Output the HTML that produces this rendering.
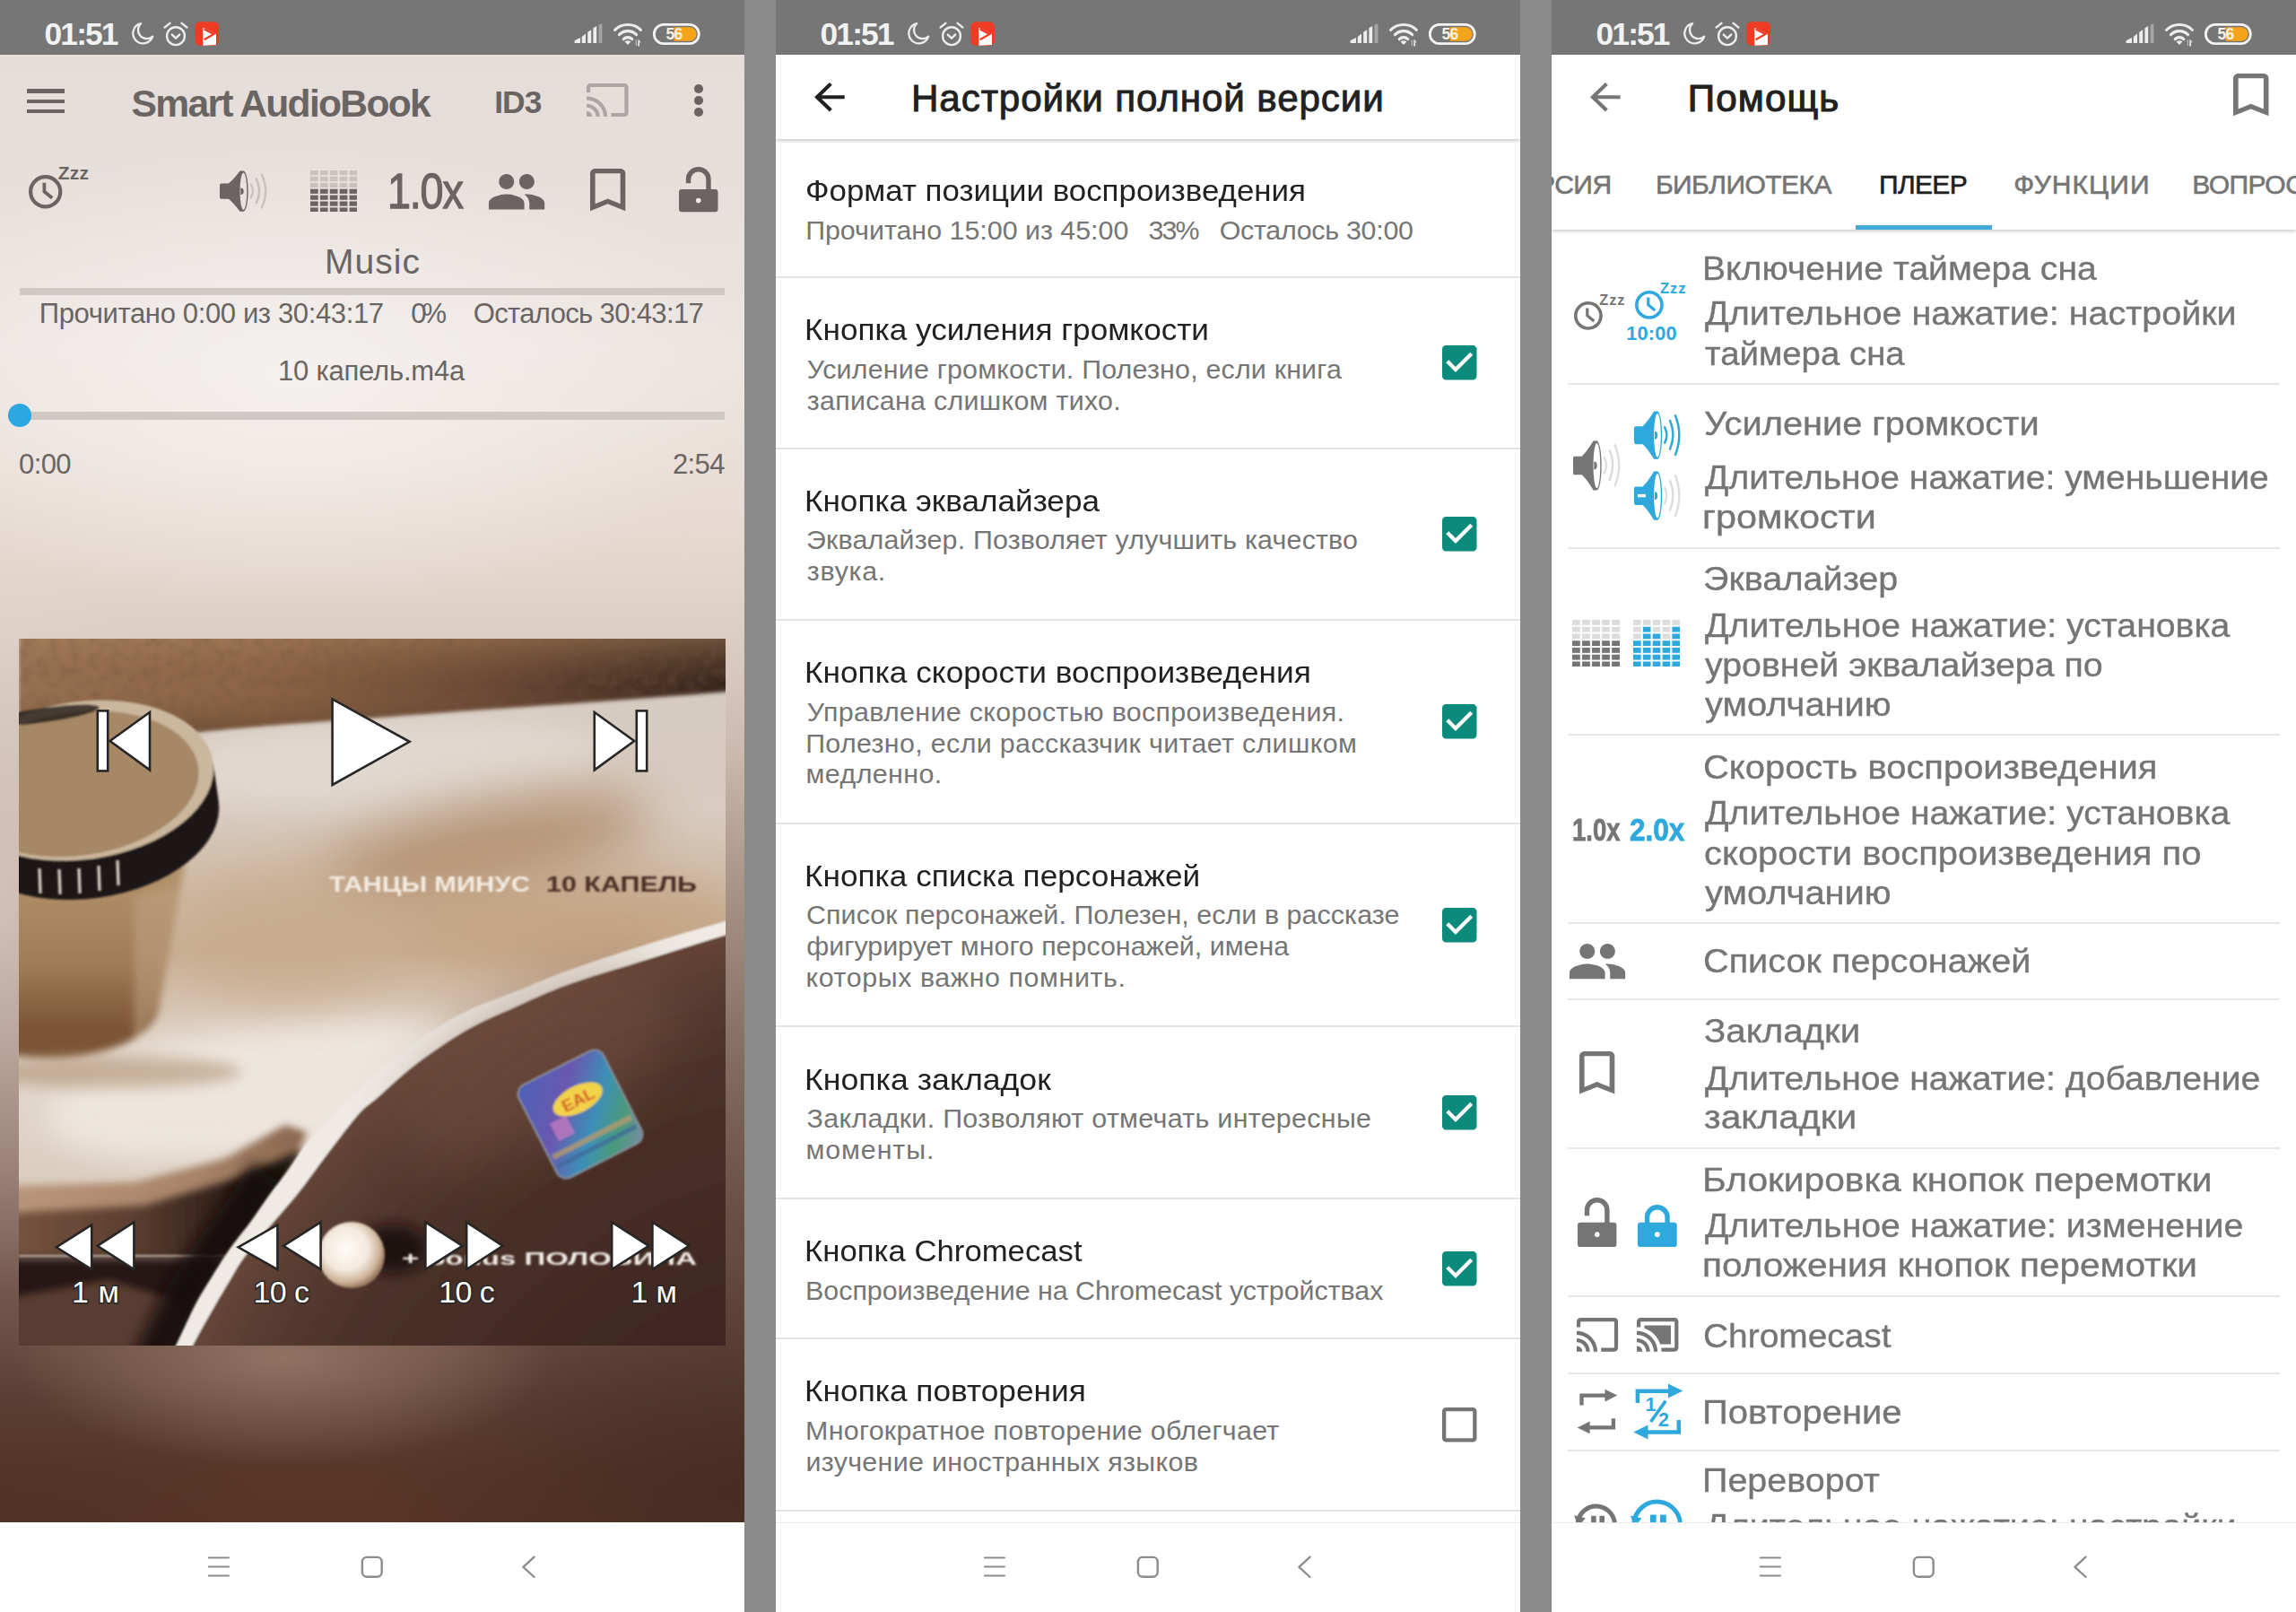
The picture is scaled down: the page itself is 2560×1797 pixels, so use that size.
<!DOCTYPE html><html lang="ru"><head><meta charset="utf-8"><title>Smart AudioBook</title><style>
html,body{margin:0;padding:0}
body{width:2560px;height:1797px;background:#8a8a8a;position:relative;overflow:hidden;font-family:"Liberation Sans",sans-serif;}
.ph{position:absolute;top:0;width:830px;height:1797px;overflow:hidden}
.t{position:absolute;white-space:nowrap;line-height:1;}
.b{position:absolute;display:block}
</style></head><body><div class="ph" style="left:0"><div class="b" style="left:0;top:61px;width:830px;height:1636px;background:radial-gradient(ellipse 260px 420px at 0px 960px, rgba(236,226,218,0.5), rgba(236,226,218,0) 100%),radial-gradient(ellipse 300px 520px at 830px 1300px, rgba(70,45,38,0.42), rgba(70,45,38,0) 100%),radial-gradient(ellipse 300px 120px at 315px 1452px, rgba(152,121,106,0.85), rgba(152,121,106,0) 100%),radial-gradient(ellipse 420px 260px at 830px 1600px, rgba(58,34,28,0.5), rgba(58,34,28,0) 100%),radial-gradient(ellipse 300px 200px at 0px 1640px, rgba(70,42,34,0.35), rgba(70,42,34,0) 100%),radial-gradient(ellipse 520px 260px at 330px 360px, rgba(246,242,240,0.9), rgba(246,242,240,0) 100%),linear-gradient(180deg,#e5ddd9 0px,#e6dfdb 149px,#ebe5e1 329px,#eadfd8 449px,#e4d7ce 559px,#dccdc3 651px,#cdbcb1 759px,#bba69a 899px,#a0877c 1099px,#80655b 1299px,#694c41 1439px,#5e4136 1499px,#583729 1579px,#573527 1636px)"></div><div class="b" style="left:0px;top:0px;width:830px;height:61px;background:#767676;"></div><div class="t" style="top:20.53px;font-size:35.4px;font-weight:700;color:#f2f2f2;letter-spacing:-1.915px;left:49.60px;">01:51</div><svg class="b" style="left:144px;top:23px;" width="30" height="30" viewBox="0 0 30 30"><path d="M13.2 3.2 A11.2 11.2 0 1 0 26.2 17.6 A9.6 9.6 0 0 1 13.2 3.2 Z" fill="none" stroke="#ededed" stroke-width="2.3" stroke-linejoin="round"/></svg><svg class="b" style="left:180px;top:22px;" width="32" height="32" viewBox="0 0 32 32"><g fill="none" stroke="#ededed" stroke-width="2.4" stroke-linecap="round" stroke-linejoin="round"><circle cx="16" cy="18.2" r="9.9"/><path d="M11.8 16.6 L16 20.6 L20.2 16.6"/><path d="M3.6 8.6 L9.4 3.8"/><path d="M28.4 8.6 L22.6 3.8"/></g></svg><svg class="b" style="left:217px;top:24px;" width="28" height="28" viewBox="0 0 28 28"><rect x="0.4" y="0.2" width="26.6" height="26.6" rx="5.5" fill="#ef3b24"/><path d="M9.4 6.8 L24 14.2 L24 26 L9.4 26.8 Z" fill="#fff"/><path d="M10.6 8.4 L21.4 14 L10.6 20.2" fill="none" stroke="#ef3b24" stroke-width="2.2"/></svg><svg class="b" style="left:640px;top:25px;" width="34" height="25" viewBox="0 0 34 25"><g fill="#ededed"><path d="M0.6 23 L0.6 20.2 L7 17 L7 23 Z"/><path d="M8.8 23 L8.8 16 L13 12.6 L13 23 Z"/><path d="M15.2 23 L15.2 10.8 L19.2 8.2 L19.2 23 Z"/><path d="M21.4 23 L21.4 6.2 L25.2 4 L25.2 23 Z"/></g><path d="M27.6 23 L27.6 2.4 L31.4 1.4 L31.4 23 Z" fill="#a6a6a6"/></svg><svg class="b" style="left:682px;top:24px;" width="38" height="28" viewBox="0 0 38 28"><g fill="none" stroke="#ededed" stroke-width="3.1" stroke-linecap="round"><path d="M3.6 9.4 A20.5 20.5 0 0 1 32.4 9.4"/><path d="M8.4 14.6 A13.6 13.6 0 0 1 27.6 14.6"/><path d="M13.2 19.6 A6.8 6.8 0 0 1 22.8 19.6"/></g><path d="M18 26 L14.6 22.6 A4.8 4.8 0 0 1 21.4 22.6 Z" fill="#ededed"/><path d="M29.6 19.6 L32.8 23.2 L31 23.2 L31 27.4 L29.2 27.4 L29.2 23.2 Z" fill="#e4e4e4"/><path d="M26.6 20.6 L28 20.6 L28 27.6 L26.6 26.4 Z" fill="#b4b4b4"/></svg><svg class="b" style="left:726px;top:24px;" width="58" height="28" viewBox="0 0 58 28"><path d="M25.6 6.3 H42.9 A7.7 7.7 0 0 1 42.9 21.7 H25.6 Z" fill="#f5a31a"/><rect x="3.3" y="3.4" width="50" height="21.2" rx="10.6" fill="none" stroke="#f4f4f4" stroke-width="2.8"/><text x="25.6" y="20.2" font-family="Liberation Sans, sans-serif" font-weight="700" font-size="17.5" fill="#f7f1e4" text-anchor="middle" letter-spacing="-0.6">56</text></svg><div class="b" style="left:30.2px;top:99.4px;width:42.1px;height:4.3px;background:#6a6562;"></div><div class="b" style="left:30.2px;top:110.8px;width:42.1px;height:4.3px;background:#6a6562;"></div><div class="b" style="left:30.2px;top:122.1px;width:42.1px;height:4.3px;background:#6a6562;"></div><div class="t" style="top:93.84px;font-size:42.6px;font-weight:700;color:#6a6562;letter-spacing:-1.714px;left:146.57px;">Smart AudioBook</div><div class="t" style="top:95.62px;font-size:35.3px;font-weight:700;color:#6a6562;letter-spacing:-0.948px;left:551.24px;">ID3</div><svg preserveAspectRatio="none" class="b" style="left:654.2px;top:93.3px;overflow:visible;" width="46.6" height="37.1" viewBox="1 3 22 18"><path d="M21 3H3c-1.1 0-2 .9-2 2v3h2V5h18v14h-7v2h7c1.1 0 2-.9 2-2V5c0-1.1-.9-2-2-2zM1 18v3h3c0-1.66-1.34-3-3-3zm0-4v2c2.76 0 5 2.24 5 5h2c0-3.87-3.13-7-7-7zm0-4v2c4.97 0 9 4.03 9 9h2c0-6.08-4.93-11-11-11z" fill="#aba6a3"/></svg><div class="b" style="left:774.3px;top:94.3px;width:9.4px;height:9.4px;border-radius:50%;background:#6a6562"></div><div class="b" style="left:774.3px;top:107.39999999999999px;width:9.4px;height:9.4px;border-radius:50%;background:#6a6562"></div><div class="b" style="left:774.3px;top:120.2px;width:9.4px;height:9.4px;border-radius:50%;background:#6a6562"></div><svg class="b" style="left:32px;top:195px;overflow:visible;" width="37.4" height="37.4" viewBox="0 0 37.4 37.4"><circle cx="18.7" cy="18.7" r="16.61" fill="none" stroke="#6a6562" stroke-width="4.19"/><path d="M17.39 8.79 V18.51 L26.18 25.81" fill="none" stroke="#6a6562" stroke-width="3.77"/></svg><div class="t" style="top:181.82px;font-size:21px;font-weight:700;color:#6a6562;letter-spacing:0.228px;left:64.67px;">Zzz</div><svg preserveAspectRatio="none" class="b" style="left:244.7px;top:190.2px;overflow:visible;" width="53.3" height="46.3" viewBox="0 0 53 46.3"><path d="M1.8 14.6 H9.7 Q15.4 10.2 22.4 0.5 H26.2 V45.8 H22.4 Q15.4 36.1 9.7 31.7 H1.8 Q0 31.7 0 29.9 V16.4 Q0 14.6 1.8 14.6 Z" fill="#6a6562"/><ellipse cx="26.2" cy="23.15" rx="5.3" ry="22.7" fill="#6a6562"/><ellipse cx="26.25" cy="23.15" rx="3.85" ry="20.7" fill="#e8e1dd"/><path d="M23.2 19.4 A3.3 3.75 0 0 1 23.2 26.9 Z" fill="#6a6562"/><g fill="none" stroke-width="2.5" stroke-linecap="round"><path d="M34.6 15.8 Q39 23 34.6 30.2" stroke="#cbc5c1"/><path d="M40.6 9.5 Q47.2 22.8 40.6 36.1" stroke="#c6c0bc"/><path d="M46.6 4.6 Q55.2 23 46.6 41.4" stroke="#c9c3bf"/></g></svg><svg class="b" style="left:345.8px;top:189.8px;" width="52.3" height="46.6" viewBox="0 0 52.3 46.6"><rect x="0.00" y="0.00" width="8.70" height="5.20" fill="#c9c3bf"/><rect x="0.00" y="6.90" width="8.70" height="5.20" fill="#c9c3bf"/><rect x="0.00" y="13.80" width="8.70" height="5.20" fill="#c9c3bf"/><rect x="0.00" y="20.70" width="8.70" height="5.20" fill="#6a6562"/><rect x="0.00" y="27.60" width="8.70" height="5.20" fill="#6a6562"/><rect x="0.00" y="34.50" width="8.70" height="5.20" fill="#6a6562"/><rect x="0.00" y="41.40" width="8.70" height="5.20" fill="#6a6562"/><rect x="10.90" y="0.00" width="8.70" height="5.20" fill="#c9c3bf"/><rect x="10.90" y="6.90" width="8.70" height="5.20" fill="#c9c3bf"/><rect x="10.90" y="13.80" width="8.70" height="5.20" fill="#c9c3bf"/><rect x="10.90" y="20.70" width="8.70" height="5.20" fill="#6a6562"/><rect x="10.90" y="27.60" width="8.70" height="5.20" fill="#6a6562"/><rect x="10.90" y="34.50" width="8.70" height="5.20" fill="#6a6562"/><rect x="10.90" y="41.40" width="8.70" height="5.20" fill="#6a6562"/><rect x="21.80" y="0.00" width="8.70" height="5.20" fill="#c9c3bf"/><rect x="21.80" y="6.90" width="8.70" height="5.20" fill="#c9c3bf"/><rect x="21.80" y="13.80" width="8.70" height="5.20" fill="#c9c3bf"/><rect x="21.80" y="20.70" width="8.70" height="5.20" fill="#6a6562"/><rect x="21.80" y="27.60" width="8.70" height="5.20" fill="#6a6562"/><rect x="21.80" y="34.50" width="8.70" height="5.20" fill="#6a6562"/><rect x="21.80" y="41.40" width="8.70" height="5.20" fill="#6a6562"/><rect x="32.70" y="0.00" width="8.70" height="5.20" fill="#c9c3bf"/><rect x="32.70" y="6.90" width="8.70" height="5.20" fill="#c9c3bf"/><rect x="32.70" y="13.80" width="8.70" height="5.20" fill="#c9c3bf"/><rect x="32.70" y="20.70" width="8.70" height="5.20" fill="#6a6562"/><rect x="32.70" y="27.60" width="8.70" height="5.20" fill="#6a6562"/><rect x="32.70" y="34.50" width="8.70" height="5.20" fill="#6a6562"/><rect x="32.70" y="41.40" width="8.70" height="5.20" fill="#6a6562"/><rect x="43.60" y="0.00" width="8.70" height="5.20" fill="#c9c3bf"/><rect x="43.60" y="6.90" width="8.70" height="5.20" fill="#c9c3bf"/><rect x="43.60" y="13.80" width="8.70" height="5.20" fill="#c9c3bf"/><rect x="43.60" y="20.70" width="8.70" height="5.20" fill="#6a6562"/><rect x="43.60" y="27.60" width="8.70" height="5.20" fill="#6a6562"/><rect x="43.60" y="34.50" width="8.70" height="5.20" fill="#6a6562"/><rect x="43.60" y="41.40" width="8.70" height="5.20" fill="#6a6562"/></svg><div class="t" style="top:186.34px;font-size:55px;color:#6a6562;left:432.41px;-webkit-text-stroke:1.3px #6a6562;transform:scaleX(0.85);transform-origin:0 0;letter-spacing:-1.4px;">1.0x</div><svg preserveAspectRatio="none" class="b" style="left:545px;top:193.5px;overflow:visible;" width="62.2" height="39.4" viewBox="1 5 22 14"><path d="M16 11c1.66 0 2.99-1.34 2.99-3S17.66 5 16 5c-1.66 0-3 1.34-3 3s1.34 3 3 3zm-8 0c1.66 0 2.99-1.34 2.99-3S9.66 5 8 5C6.34 5 5 6.34 5 8s1.34 3 3 3zm0 2c-2.33 0-7 1.17-7 3.5V19h14v-2.5c0-2.33-4.67-3.5-7-3.5zm8 0c-.29 0-.62.02-.97.05 1.16.84 1.97 1.97 1.97 3.45V19h6v-2.5c0-2.33-4.67-3.5-7-3.5z" fill="#6a6562"/></svg><svg preserveAspectRatio="none" class="b" style="left:657.9px;top:188.4px;overflow:visible;" width="39.3" height="47.2" viewBox="5 3 14 18"><path d="M17 3H7c-1.1 0-1.99.9-1.99 2L5 21l7-3 7 3V5c0-1.1-.9-2-2-2zm0 15l-5-2.18L7 18V5h10v13z" fill="#6a6562"/></svg><svg class="b" style="left:757px;top:186.2px;overflow:visible;" width="43.5" height="50.3" viewBox="0 0 43.5 50.3"><path d="M10.53 18.30 V13.92 A11.22 11.22 0 0 1 32.97 13.92 V26.10" fill="none" stroke="#6a6562" stroke-width="5.4"/><rect x="0" y="25.10" width="43.5" height="25.2" rx="3.2" fill="#6a6562"/><circle cx="21.75" cy="37.45" r="2.8" fill="#efeae7"/></svg><div class="t" style="top:271.99px;font-size:39px;color:#6a6562;letter-spacing:1.096px;left:-185.00px;width:1200px;text-align:center;text-indent:1.096px;">Music</div><div class="b" style="left:21.5px;top:320.6px;width:786.5px;height:8px;background:#cfc9c6;"></div><div class="t" style="top:334.36px;font-size:31px;color:#6a6562;letter-spacing:-0.364px;left:43.79px;">Прочитано 0:00 из 30:43:17</div><div class="t" style="top:334.36px;font-size:31px;color:#6a6562;letter-spacing:-4.889px;left:458.19px;">0%</div><div class="t" style="top:334.36px;font-size:31px;color:#6a6562;letter-spacing:-0.643px;left:527.73px;">Осталось 30:43:17</div><div class="t" style="top:397.86px;font-size:31px;color:#6a6562;letter-spacing:-0.215px;left:310.04px;">10 капель.m4a</div><div class="b" style="left:21.5px;top:459.4px;width:786.5px;height:8.2px;background:#cec7c3;"></div><div class="b" style="left:8.5px;top:450.3px;width:26px;height:26px;border-radius:50%;background:#2ba8e0"></div><div class="t" style="top:502.16px;font-size:31px;color:#6a6562;letter-spacing:-0.605px;left:21.09px;">0:00</div><div class="t" style="top:502.16px;font-size:31px;color:#6a6562;letter-spacing:-0.623px;left:749.94px;">2:54</div><svg class="b" style="left:21px;top:712px" width="788" height="788" viewBox="21 712 788 788"><defs>
<filter id="bl2" filterUnits="userSpaceOnUse" x="-300" y="400" width="1500" height="1500"><feGaussianBlur stdDeviation="2"/></filter>
<filter id="bl1" filterUnits="userSpaceOnUse" x="-300" y="400" width="1500" height="1500"><feGaussianBlur stdDeviation="1.1"/></filter>
<filter id="bl4" filterUnits="userSpaceOnUse" x="-300" y="400" width="1500" height="1500"><feGaussianBlur stdDeviation="4"/></filter>
<filter id="bl8" filterUnits="userSpaceOnUse" x="-300" y="400" width="1500" height="1500"><feGaussianBlur stdDeviation="8"/></filter>
<filter id="bl16" filterUnits="userSpaceOnUse" x="-300" y="400" width="1500" height="1500"><feGaussianBlur stdDeviation="16"/></filter>
<filter id="bl30" filterUnits="userSpaceOnUse" x="-300" y="400" width="1500" height="1500"><feGaussianBlur stdDeviation="30"/></filter>
<filter id="lea" x="0" y="0" width="100%" height="100%"><feTurbulence type="fractalNoise" baseFrequency="0.09" numOctaves="2" seed="7" result="n"/><feColorMatrix in="n" type="matrix" values="0 0 0 0 0.16  0 0 0 0 0.09  0 0 0 0 0.05  0 0 0 1.5 -0.62"/><feGaussianBlur stdDeviation="1.2"/><feComposite in2="SourceGraphic" operator="in"/></filter>
<linearGradient id="gLea" x1="21" y1="0" x2="809" y2="0" gradientUnits="userSpaceOnUse"><stop offset="0" stop-color="#977252"/><stop offset="0.35" stop-color="#8b6446"/><stop offset="0.65" stop-color="#6c4a36"/><stop offset="0.85" stop-color="#4e3528"/><stop offset="1" stop-color="#35241c"/></linearGradient>
<linearGradient id="gLeaV" x1="0" y1="712" x2="0" y2="830" gradientUnits="userSpaceOnUse"><stop offset="0" stop-color="#b08a62" stop-opacity="0.45"/><stop offset="0.45" stop-color="#8b6244" stop-opacity="0"/><stop offset="1" stop-color="#2a1a12" stop-opacity="0.5"/></linearGradient>
<linearGradient id="gSurf" x1="0" y1="780" x2="0" y2="1340" gradientUnits="userSpaceOnUse"><stop offset="0" stop-color="#d6cbc1"/><stop offset="0.22" stop-color="#d8cbbf"/><stop offset="0.5" stop-color="#c9ae94"/><stop offset="0.72" stop-color="#e4dad0"/><stop offset="1" stop-color="#d9cabc"/></linearGradient>
<radialGradient id="gDisc" cx="953" cy="1832" r="814" gradientUnits="userSpaceOnUse"><stop offset="0.5" stop-color="#3f2822"/><stop offset="0.8" stop-color="#4c3129"/><stop offset="0.93" stop-color="#5a3d32"/><stop offset="1" stop-color="#684739"/></radialGradient>
<radialGradient id="gPearl" cx="386" cy="1392" r="44" gradientUnits="userSpaceOnUse"><stop offset="0" stop-color="#fffdf8"/><stop offset="0.55" stop-color="#f3e9dc"/><stop offset="0.85" stop-color="#cdb39a"/><stop offset="1" stop-color="#9a7a60"/></radialGradient>
<linearGradient id="gGlass" x1="0" y1="980" x2="0" y2="1190" gradientUnits="userSpaceOnUse"><stop offset="0" stop-color="#b09069"/><stop offset="0.45" stop-color="#a07c57"/><stop offset="0.8" stop-color="#7b5535"/></linearGradient>
<linearGradient id="gStk" x1="0" y1="0" x2="1" y2="1"><stop offset="0" stop-color="#4a62b8"/><stop offset="0.35" stop-color="#6a58b0"/><stop offset="0.6" stop-color="#3c8fb8"/><stop offset="0.8" stop-color="#4a9a7a"/><stop offset="1" stop-color="#7a8aa8"/></linearGradient>
<clipPath id="cArt"><rect x="21" y="712" width="788" height="788"/></clipPath>
</defs><g clip-path="url(#cArt)"><rect x="21" y="712" width="788" height="788" fill="url(#gSurf)"/><ellipse cx="420" cy="850" rx="260" ry="45" fill="#e2dad2" opacity="0.85" filter="url(#bl16)" transform="rotate(-3 420 850)"/><ellipse cx="300" cy="1215" rx="250" ry="70" fill="#efe8e0" opacity="0.9" filter="url(#bl16)" transform="rotate(-8 300 1215)"/><ellipse cx="540" cy="945" rx="190" ry="48" fill="#ad8868" opacity="0.8" filter="url(#bl30)" transform="rotate(-12 540 945)"/><ellipse cx="640" cy="1030" rx="200" ry="50" fill="#c2a180" opacity="0.8" filter="url(#bl30)"/><ellipse cx="320" cy="1040" rx="120" ry="70" fill="#c7ab8e" opacity="0.8" filter="url(#bl30)"/><g filter="url(#bl2)"><path d="M21 700 H820 V770 C700 781 560 789 434 799 C330 806 260 812 200 818 L21 830 Z" fill="url(#gLea)"/><path d="M21 700 H820 V770 C700 781 560 789 434 799 C330 806 260 812 200 818 L21 830 Z" fill="url(#gLeaV)"/></g><path d="M21 700 H820 V770 C700 781 560 789 434 799 C330 806 260 812 200 818 L21 830 Z" fill="#000" filter="url(#lea)" opacity="0.55"/><linearGradient id="gBand" x1="21" y1="0" x2="340" y2="0" gradientUnits="userSpaceOnUse"><stop offset="0" stop-color="#b8957a"/><stop offset="0.6" stop-color="#a8846a"/><stop offset="1" stop-color="#8a674f"/></linearGradient><linearGradient id="gBrn" x1="21" y1="0" x2="300" y2="0" gradientUnits="userSpaceOnUse"><stop offset="0" stop-color="#74523e"/><stop offset="0.45" stop-color="#5c3f30"/><stop offset="0.8" stop-color="#33211a"/><stop offset="1" stop-color="#1c120e"/></linearGradient><path d="M10 1322 L150 1318 L250 1292 L318 1254 L342 1262 L330 1292 L262 1324 L160 1354 L10 1364 Z" fill="url(#gBand)" filter="url(#bl4)"/><path d="M10 1352 L160 1344 L262 1314 L336 1282 L306 1345 L262 1404 L10 1404 Z" fill="url(#gBrn)" filter="url(#bl4)"/><g filter="url(#bl4)"><path d="M10 1402 L300 1402 L360 1300 L420 1240 L470 1510 L10 1510 Z" fill="#261813"/><path d="M10 1448 L120 1428 L200 1452 L185 1510 L10 1510 Z" fill="#5a3d30"/></g><path d="M21 1400 H250" stroke="#b9aaa0" stroke-width="2.2" filter="url(#bl1)"/><path d="M321 1304.5 C317.8 1308.8 308.6 1320.6 301.6 1330.3 C294.6 1340.0 285.7 1353.4 279.0 1362.6 C272.3 1371.8 266.1 1378.8 261.3 1385.2 C256.5 1391.7 254.6 1394.3 250.0 1401.3 C245.4 1408.3 239.3 1418.2 233.9 1427.1 C228.5 1436.0 223.3 1443.8 217.7 1454.5 C212.0 1465.2 207.3 1476.5 200.0 1491.6 C192.7 1506.7 178.3 1536.1 174.0 1545.0" fill="none" stroke="#150d0a" stroke-width="40" opacity="0.9" filter="url(#bl8)" transform="translate(-22 4)"/><g filter="url(#bl1)"><path d="M900 1003 C884.8 1007.0 838.8 1018.5 808.5 1027.0 C778.2 1035.5 747.2 1044.6 718.0 1053.8 C688.8 1063.0 656.6 1073.5 633.0 1082.0 C609.4 1090.5 595.3 1097.2 576.4 1104.8 C557.5 1112.4 538.7 1118.0 519.8 1127.4 C500.9 1136.8 479.5 1150.1 463.0 1161.4 C446.5 1172.7 435.2 1182.6 420.7 1195.4 C406.2 1208.2 388.9 1225.2 376.0 1238.0 C363.1 1250.8 352.7 1261.2 343.5 1272.3 C334.3 1283.4 328.0 1294.8 321.0 1304.5 C314.0 1314.2 308.6 1320.6 301.6 1330.3 C294.6 1340.0 285.7 1353.4 279.0 1362.6 C272.3 1371.8 266.1 1378.8 261.3 1385.2 C256.5 1391.7 254.6 1394.3 250.0 1401.3 C245.4 1408.3 239.3 1418.2 233.9 1427.1 C228.5 1436.0 223.3 1443.8 217.7 1454.5 C212.0 1465.2 207.3 1476.5 200.0 1491.6 C192.7 1506.7 178.3 1536.1 174.0 1545.0 L900 1550 Z" fill="#efeae4"/><path d="M900 1016 C884.8 1020.4 838.8 1033.4 808.5 1042.5 C778.2 1051.6 747.2 1061.6 718.0 1070.8 C688.8 1080.0 656.6 1089.2 633.0 1097.7 C609.4 1106.2 595.3 1113.2 576.4 1121.7 C557.5 1130.2 538.7 1137.7 519.8 1148.6 C500.9 1159.5 479.5 1174.4 463.0 1186.9 C446.5 1199.4 430.9 1214.9 420.7 1223.7 C410.5 1232.5 409.1 1231.9 401.6 1240.0 C394.1 1248.1 384.1 1261.5 375.8 1272.3 C367.5 1283.0 358.9 1294.8 351.6 1304.5 C344.4 1314.2 340.1 1320.6 332.3 1330.3 C324.5 1340.0 314.8 1350.8 304.8 1362.6 C294.9 1374.4 280.7 1390.5 272.6 1401.3 C264.6 1412.0 261.9 1418.2 256.5 1427.1 C251.1 1436.0 246.5 1443.8 240.3 1454.5 C234.1 1465.2 227.5 1476.5 219.4 1491.6 C211.3 1506.7 196.6 1536.1 192.0 1545.0 L900 1550 Z" fill="url(#gDisc)"/></g><ellipse cx="600" cy="1190" rx="170" ry="80" fill="#7a5646" opacity="0.4" filter="url(#bl30)" transform="rotate(-30 600 1190)"/><g filter="url(#bl4)"><path d="M10 975 L206 962 L178 1120 C170 1170 80 1188 10 1176 Z" fill="url(#gGlass)"/><path d="M150 1000 L204 985 L178 1120 L150 1160 Z" fill="#c2a684" opacity="0.5"/></g><ellipse cx="120" cy="1195" rx="150" ry="18" fill="#a98868" opacity="0.55" filter="url(#bl8)"/><g filter="url(#bl1)" transform="rotate(-8 92 870)"><ellipse cx="92" cy="914" rx="147" ry="88" fill="#1b1715"/><rect x="-55" y="870" width="294" height="44" fill="#1b1715"/><ellipse cx="92" cy="870" rx="147" ry="88" fill="#cbb79d"/><ellipse cx="86" cy="873" rx="136" ry="80" fill="#a68866"/><ellipse cx="60" cy="792" rx="62" ry="8" fill="#231b16" opacity="0.8"/></g><path d="M44 968 l1 28" stroke="#e9e1d6" stroke-width="3.4" opacity="0.9" filter="url(#bl1)"/><path d="M66 969 l1 28" stroke="#e9e1d6" stroke-width="3.4" opacity="0.9" filter="url(#bl1)"/><path d="M88 968 l1 28" stroke="#e9e1d6" stroke-width="3.4" opacity="0.9" filter="url(#bl1)"/><path d="M110 965 l1 28" stroke="#e9e1d6" stroke-width="3.4" opacity="0.9" filter="url(#bl1)"/><path d="M131 959 l1 28" stroke="#e9e1d6" stroke-width="3.4" opacity="0.9" filter="url(#bl1)"/><ellipse cx="438" cy="1392" rx="40" ry="27" fill="#140c09" opacity="0.85" filter="url(#bl8)"/><circle cx="392" cy="1399" r="37" fill="url(#gPearl)" filter="url(#bl1)"/><g transform="rotate(-27 647 1242)" filter="url(#bl1)"><rect x="594" y="1184" width="106" height="116" rx="12" fill="url(#gStk)" stroke="#8a8f9a" stroke-width="2"/><rect x="598" y="1268" width="98" height="6" fill="#b59a6a" opacity="0.8"/><rect x="598" y="1280" width="98" height="5" fill="#3e6a9a" opacity="0.8"/><ellipse cx="652" cy="1226" rx="30" ry="15" fill="#f2d24a"/><rect x="612" y="1236" width="20" height="22" fill="#c77ac0" opacity="0.75"/><text x="652" y="1233" font-family="Liberation Sans, sans-serif" font-weight="700" font-size="19" fill="#d4522a" text-anchor="middle">EAL</text></g><g font-family="Liberation Sans, sans-serif" font-weight="700" filter="url(#bl1)"><text x="367" y="993.5" font-size="24" fill="#f4ece2" textLength="224" lengthAdjust="spacingAndGlyphs">ТАНЦЫ МИНУС</text><text x="609" y="993.5" font-size="24" fill="#4b2e25" textLength="168" lengthAdjust="spacingAndGlyphs">10 КАПЕЛЬ</text><text x="448" y="1410" font-size="21" fill="#f1ece6" textLength="329" lengthAdjust="spacingAndGlyphs">+ bonus ПОЛОВИНА</text></g></g></svg><svg class="b" style="left:0px;top:712px;" width="830" height="788" viewBox="0 712 830 788"><rect x="108.8" y="792.4" width="11.4" height="67" fill="#fff" stroke="#262626" stroke-width="2.6" stroke-linejoin="miter"/><path d="M122.6 826 L167 794 V858.4 Z" fill="#fff" stroke="#262626" stroke-width="2.6" stroke-linejoin="miter"/><path d="M370.6 779.4 V875 L456.6 826.8 Z" fill="#fff" stroke="#262626" stroke-width="2.6" stroke-linejoin="miter"/><path d="M662.8 794 V858.4 L707.2 826 Z" fill="#fff" stroke="#262626" stroke-width="2.6" stroke-linejoin="miter"/><rect x="709.8" y="792.4" width="11.4" height="67" fill="#fff" stroke="#262626" stroke-width="2.6" stroke-linejoin="miter"/><path d="M108.6 1388.8 L149.4 1362.4 V1415.2 Z" fill="#fff" stroke="#262626" stroke-width="2.6" stroke-linejoin="miter"/><path d="M62.8 1390.3 L102.2 1365.4 V1415.2 Z" fill="#fff" stroke="#262626" stroke-width="2.6" stroke-linejoin="miter"/><path d="M316 1388.8 L357.6 1362.4 V1415.2 Z" fill="#fff" stroke="#262626" stroke-width="2.6" stroke-linejoin="miter"/><path d="M265.6 1390.3 L309.4 1365.4 V1415.2 Z" fill="#fff" stroke="#262626" stroke-width="2.6" stroke-linejoin="miter"/><path d="M515.6 1388.8 L474.4 1362.4 V1415.2 Z" fill="#fff" stroke="#262626" stroke-width="2.6" stroke-linejoin="miter"/><path d="M560.6 1388.8 L520.2 1362.4 V1415.2 Z" fill="#fff" stroke="#262626" stroke-width="2.6" stroke-linejoin="miter"/><path d="M723.4 1388.8 L682.2 1362.4 V1415.2 Z" fill="#fff" stroke="#262626" stroke-width="2.6" stroke-linejoin="miter"/><path d="M768.4 1388.8 L727.4 1362.4 V1415.2 Z" fill="#fff" stroke="#262626" stroke-width="2.6" stroke-linejoin="miter"/></svg><div class="t" style="top:1422.72px;font-size:34px;color:#fff;letter-spacing:0.600px;left:80.01px;-webkit-text-stroke:3px #262626;paint-order:stroke fill;">1 м</div><div class="t" style="top:1422.72px;font-size:34px;color:#fff;letter-spacing:-0.593px;left:282.41px;-webkit-text-stroke:3px #262626;paint-order:stroke fill;">10 с</div><div class="t" style="top:1422.72px;font-size:34px;color:#fff;letter-spacing:-0.593px;left:489.21px;-webkit-text-stroke:3px #262626;paint-order:stroke fill;">10 с</div><div class="t" style="top:1422.72px;font-size:34px;color:#fff;letter-spacing:-0.200px;left:703.61px;-webkit-text-stroke:3px #262626;paint-order:stroke fill;">1 м</div><div class="b" style="left:0px;top:1697px;width:830px;height:100px;background:#fff;"></div><svg class="b" style="left:230px;top:1733px;" width="28" height="28" viewBox="0 0 28 28"><g stroke="#8c8c8c" stroke-width="2" stroke-linecap="round"><path d="M2.8 3.6H25"/><path d="M2.8 13.6H25"/><path d="M2.8 23.6H25"/></g></svg><svg class="b" style="left:401px;top:1733px;" width="28" height="28" viewBox="0 0 28 28"><rect x="2.9" y="2.9" width="21.8" height="21.8" rx="5.2" fill="none" stroke="#8c8c8c" stroke-width="2.4"/></svg><svg class="b" style="left:578px;top:1733px;" width="24" height="28" viewBox="0 0 24 28"><path d="M17.6 2.6 L5.4 13.8 L17.6 25" fill="none" stroke="#8c8c8c" stroke-width="2.3" stroke-linecap="round" stroke-linejoin="round"/></svg></div>
<div class="ph" style="left:865px;background:#fff"><div class="b" style="left:0px;top:0px;width:830px;height:61px;background:#767676;"></div><div class="t" style="top:20.53px;font-size:35.4px;font-weight:700;color:#f2f2f2;letter-spacing:-1.915px;left:49.60px;">01:51</div><svg class="b" style="left:144px;top:23px;" width="30" height="30" viewBox="0 0 30 30"><path d="M13.2 3.2 A11.2 11.2 0 1 0 26.2 17.6 A9.6 9.6 0 0 1 13.2 3.2 Z" fill="none" stroke="#ededed" stroke-width="2.3" stroke-linejoin="round"/></svg><svg class="b" style="left:180px;top:22px;" width="32" height="32" viewBox="0 0 32 32"><g fill="none" stroke="#ededed" stroke-width="2.4" stroke-linecap="round" stroke-linejoin="round"><circle cx="16" cy="18.2" r="9.9"/><path d="M11.8 16.6 L16 20.6 L20.2 16.6"/><path d="M3.6 8.6 L9.4 3.8"/><path d="M28.4 8.6 L22.6 3.8"/></g></svg><svg class="b" style="left:217px;top:24px;" width="28" height="28" viewBox="0 0 28 28"><rect x="0.4" y="0.2" width="26.6" height="26.6" rx="5.5" fill="#ef3b24"/><path d="M9.4 6.8 L24 14.2 L24 26 L9.4 26.8 Z" fill="#fff"/><path d="M10.6 8.4 L21.4 14 L10.6 20.2" fill="none" stroke="#ef3b24" stroke-width="2.2"/></svg><svg class="b" style="left:640px;top:25px;" width="34" height="25" viewBox="0 0 34 25"><g fill="#ededed"><path d="M0.6 23 L0.6 20.2 L7 17 L7 23 Z"/><path d="M8.8 23 L8.8 16 L13 12.6 L13 23 Z"/><path d="M15.2 23 L15.2 10.8 L19.2 8.2 L19.2 23 Z"/><path d="M21.4 23 L21.4 6.2 L25.2 4 L25.2 23 Z"/></g><path d="M27.6 23 L27.6 2.4 L31.4 1.4 L31.4 23 Z" fill="#a6a6a6"/></svg><svg class="b" style="left:682px;top:24px;" width="38" height="28" viewBox="0 0 38 28"><g fill="none" stroke="#ededed" stroke-width="3.1" stroke-linecap="round"><path d="M3.6 9.4 A20.5 20.5 0 0 1 32.4 9.4"/><path d="M8.4 14.6 A13.6 13.6 0 0 1 27.6 14.6"/><path d="M13.2 19.6 A6.8 6.8 0 0 1 22.8 19.6"/></g><path d="M18 26 L14.6 22.6 A4.8 4.8 0 0 1 21.4 22.6 Z" fill="#ededed"/><path d="M29.6 19.6 L32.8 23.2 L31 23.2 L31 27.4 L29.2 27.4 L29.2 23.2 Z" fill="#e4e4e4"/><path d="M26.6 20.6 L28 20.6 L28 27.6 L26.6 26.4 Z" fill="#b4b4b4"/></svg><svg class="b" style="left:726px;top:24px;" width="58" height="28" viewBox="0 0 58 28"><path d="M25.6 6.3 H42.9 A7.7 7.7 0 0 1 42.9 21.7 H25.6 Z" fill="#f5a31a"/><rect x="3.3" y="3.4" width="50" height="21.2" rx="10.6" fill="none" stroke="#f4f4f4" stroke-width="2.8"/><text x="25.6" y="20.2" font-family="Liberation Sans, sans-serif" font-weight="700" font-size="17.5" fill="#f7f1e4" text-anchor="middle" letter-spacing="-0.6">56</text></svg><div class="t" style="top:196.04px;font-size:33.5px;color:#212121;left:33.19px;transform:scaleX(1.0413);transform-origin:0 0;">Формат позиции воспроизведения</div><div class="t" style="top:240.87px;font-size:30.4px;color:#757575;letter-spacing:-0.003px;left:33.14px;">Прочитано 15:00 из 45:00</div><div class="t" style="top:240.87px;font-size:30.4px;color:#757575;letter-spacing:-1.852px;left:415.44px;">33%</div><div class="t" style="top:240.87px;font-size:30.4px;color:#757575;letter-spacing:-0.281px;left:494.76px;">Осталось 30:00</div><div class="b" style="left:0px;top:308px;width:830px;height:1.7px;background:#e3e3e3;"></div><div class="t" style="top:351.04px;font-size:33.5px;color:#212121;left:32.32px;transform:scaleX(1.0494);transform-origin:0 0;">Кнопка усиления громкости</div><div class="t" style="top:395.87px;font-size:30.4px;color:#757575;letter-spacing:0.194px;left:34.78px;">Усиление громкости. Полезно, если книга</div><div class="t" style="top:430.57px;font-size:30.4px;color:#757575;letter-spacing:0.293px;left:34.87px;">записана слишком тихо.</div><svg preserveAspectRatio="none" class="b" style="left:743px;top:385.05px;overflow:visible;" width="38.5" height="38.5" viewBox="3 3 18 18"><path d="M19 3H5c-1.11 0-2 .9-2 2v14c0 1.1.89 2 2 2h14c1.11 0 2-.9 2-2V5c0-1.1-.89-2-2-2zm-9 14l-5-5 1.41-1.41L10 14.17l7.59-7.59L19 8l-9 9z" fill="#0c8a7b"/></svg><div class="b" style="left:0px;top:499px;width:830px;height:1.7px;background:#e3e3e3;"></div><div class="t" style="top:541.64px;font-size:33.5px;color:#212121;left:32.32px;transform:scaleX(1.0488);transform-origin:0 0;">Кнопка эквалайзера</div><div class="t" style="top:586.47px;font-size:30.4px;color:#757575;letter-spacing:0.179px;left:34.04px;">Эквалайзер. Позволяет улучшить качество</div><div class="t" style="top:621.17px;font-size:30.4px;color:#757575;letter-spacing:0.692px;left:34.87px;">звука.</div><svg preserveAspectRatio="none" class="b" style="left:743px;top:576.1500000000001px;overflow:visible;" width="38.5" height="38.5" viewBox="3 3 18 18"><path d="M19 3H5c-1.11 0-2 .9-2 2v14c0 1.1.89 2 2 2h14c1.11 0 2-.9 2-2V5c0-1.1-.89-2-2-2zm-9 14l-5-5 1.41-1.41L10 14.17l7.59-7.59L19 8l-9 9z" fill="#0c8a7b"/></svg><div class="b" style="left:0px;top:690px;width:830px;height:1.7px;background:#e3e3e3;"></div><div class="t" style="top:733.24px;font-size:33.5px;color:#212121;left:32.31px;transform:scaleX(1.0516);transform-origin:0 0;">Кнопка скорости воспроизведения</div><div class="t" style="top:778.07px;font-size:30.4px;color:#757575;letter-spacing:0.325px;left:34.78px;">Управление скоростью воспроизведения.</div><div class="t" style="top:812.77px;font-size:30.4px;color:#757575;letter-spacing:0.353px;left:33.14px;">Полезно, если рассказчик читает слишком</div><div class="t" style="top:847.47px;font-size:30.4px;color:#757575;letter-spacing:0.428px;left:33.49px;">медленно.</div><svg preserveAspectRatio="none" class="b" style="left:743px;top:785.1px;overflow:visible;" width="38.5" height="38.5" viewBox="3 3 18 18"><path d="M19 3H5c-1.11 0-2 .9-2 2v14c0 1.1.89 2 2 2h14c1.11 0 2-.9 2-2V5c0-1.1-.89-2-2-2zm-9 14l-5-5 1.41-1.41L10 14.17l7.59-7.59L19 8l-9 9z" fill="#0c8a7b"/></svg><div class="b" style="left:0px;top:917px;width:830px;height:1.7px;background:#e3e3e3;"></div><div class="t" style="top:959.54px;font-size:33.5px;color:#212121;left:32.31px;transform:scaleX(1.0509);transform-origin:0 0;">Кнопка списка персонажей</div><div class="t" style="top:1004.37px;font-size:30.4px;color:#757575;letter-spacing:0.071px;left:34.06px;">Список персонажей. Полезен, если в рассказе</div><div class="t" style="top:1039.07px;font-size:30.4px;color:#757575;letter-spacing:0.002px;left:34.32px;">фигурирует много персонажей, имена</div><div class="t" style="top:1073.77px;font-size:30.4px;color:#757575;letter-spacing:0.581px;left:33.55px;">которых важно помнить.</div><svg preserveAspectRatio="none" class="b" style="left:743px;top:1011.75px;overflow:visible;" width="38.5" height="38.5" viewBox="3 3 18 18"><path d="M19 3H5c-1.11 0-2 .9-2 2v14c0 1.1.89 2 2 2h14c1.11 0 2-.9 2-2V5c0-1.1-.89-2-2-2zm-9 14l-5-5 1.41-1.41L10 14.17l7.59-7.59L19 8l-9 9z" fill="#0c8a7b"/></svg><div class="b" style="left:0px;top:1143px;width:830px;height:1.7px;background:#e3e3e3;"></div><div class="t" style="top:1186.54px;font-size:33.5px;color:#212121;left:32.28px;transform:scaleX(1.0643);transform-origin:0 0;">Кнопка закладок</div><div class="t" style="top:1231.37px;font-size:30.4px;color:#757575;letter-spacing:0.313px;left:34.61px;">Закладки. Позволяют отмечать интересные</div><div class="t" style="top:1266.07px;font-size:30.4px;color:#757575;letter-spacing:0.894px;left:33.49px;">моменты.</div><svg preserveAspectRatio="none" class="b" style="left:743px;top:1221.0px;overflow:visible;" width="38.5" height="38.5" viewBox="3 3 18 18"><path d="M19 3H5c-1.11 0-2 .9-2 2v14c0 1.1.89 2 2 2h14c1.11 0 2-.9 2-2V5c0-1.1-.89-2-2-2zm-9 14l-5-5 1.41-1.41L10 14.17l7.59-7.59L19 8l-9 9z" fill="#0c8a7b"/></svg><div class="b" style="left:0px;top:1335px;width:830px;height:1.7px;background:#e3e3e3;"></div><div class="t" style="top:1378.04px;font-size:33.5px;color:#212121;left:32.35px;transform:scaleX(1.0365);transform-origin:0 0;">Кнопка Chromecast</div><div class="t" style="top:1422.87px;font-size:30.4px;color:#757575;letter-spacing:-0.029px;left:33.11px;">Воспроизведение на Chromecast устройствах</div><svg preserveAspectRatio="none" class="b" style="left:743px;top:1394.75px;overflow:visible;" width="38.5" height="38.5" viewBox="3 3 18 18"><path d="M19 3H5c-1.11 0-2 .9-2 2v14c0 1.1.89 2 2 2h14c1.11 0 2-.9 2-2V5c0-1.1-.89-2-2-2zm-9 14l-5-5 1.41-1.41L10 14.17l7.59-7.59L19 8l-9 9z" fill="#0c8a7b"/></svg><div class="b" style="left:0px;top:1491px;width:830px;height:1.7px;background:#e3e3e3;"></div><div class="t" style="top:1534.04px;font-size:33.5px;color:#212121;left:32.31px;transform:scaleX(1.0526);transform-origin:0 0;">Кнопка повторения</div><div class="t" style="top:1578.87px;font-size:30.4px;color:#757575;letter-spacing:0.281px;left:33.11px;">Многократное повторение облегчает</div><div class="t" style="top:1613.57px;font-size:30.4px;color:#757575;letter-spacing:0.313px;left:33.49px;">изучение иностранных языков</div><svg preserveAspectRatio="none" class="b" style="left:743px;top:1568.5px;overflow:visible;" width="38.5" height="38.5" viewBox="3 3 18 18"><path d="M19 5v14H5V5h14m0-2H5c-1.1 0-2 .9-2 2v14c0 1.1.9 2 2 2h14c1.1 0 2-.9 2-2V5c0-1.1-.9-2-2-2z" fill="#757575"/></svg><div class="b" style="left:0px;top:1683px;width:830px;height:1.7px;background:#e3e3e3;"></div><div class="b" style="left:0;top:61px;width:830px;height:93.6px;background:#fff;box-shadow:0 1.5px 4px rgba(0,0,0,0.22)"></div><svg preserveAspectRatio="none" class="b" style="left:42.7px;top:92.2px;overflow:visible;" width="33.7" height="32.4" viewBox="4 4 16 16"><path d="M20 11H7.83l5.59-5.59L12 4l-8 8 8 8 1.41-1.41L7.83 13H20v-2z" fill="#212121"/></svg><div class="t" style="top:88.88px;font-size:42.2px;color:#212121;letter-spacing:0.864px;left:151.04px;-webkit-text-stroke:0.9px #212121;">Настройки полной версии</div><div class="b" style="left:0px;top:1697px;width:830px;height:100px;background:#fff;border-top:1.5px solid #e9e9e9;"></div><svg class="b" style="left:230px;top:1733px;" width="28" height="28" viewBox="0 0 28 28"><g stroke="#8c8c8c" stroke-width="2" stroke-linecap="round"><path d="M2.8 3.6H25"/><path d="M2.8 13.6H25"/><path d="M2.8 23.6H25"/></g></svg><svg class="b" style="left:401px;top:1733px;" width="28" height="28" viewBox="0 0 28 28"><rect x="2.9" y="2.9" width="21.8" height="21.8" rx="5.2" fill="none" stroke="#8c8c8c" stroke-width="2.4"/></svg><svg class="b" style="left:578px;top:1733px;" width="24" height="28" viewBox="0 0 24 28"><path d="M17.6 2.6 L5.4 13.8 L17.6 25" fill="none" stroke="#8c8c8c" stroke-width="2.3" stroke-linecap="round" stroke-linejoin="round"/></svg></div>
<div class="ph" style="left:1730px;background:#fff"><div class="b" style="left:0px;top:0px;width:830px;height:61px;background:#767676;"></div><div class="t" style="top:20.53px;font-size:35.4px;font-weight:700;color:#f2f2f2;letter-spacing:-1.915px;left:49.60px;">01:51</div><svg class="b" style="left:144px;top:23px;" width="30" height="30" viewBox="0 0 30 30"><path d="M13.2 3.2 A11.2 11.2 0 1 0 26.2 17.6 A9.6 9.6 0 0 1 13.2 3.2 Z" fill="none" stroke="#ededed" stroke-width="2.3" stroke-linejoin="round"/></svg><svg class="b" style="left:180px;top:22px;" width="32" height="32" viewBox="0 0 32 32"><g fill="none" stroke="#ededed" stroke-width="2.4" stroke-linecap="round" stroke-linejoin="round"><circle cx="16" cy="18.2" r="9.9"/><path d="M11.8 16.6 L16 20.6 L20.2 16.6"/><path d="M3.6 8.6 L9.4 3.8"/><path d="M28.4 8.6 L22.6 3.8"/></g></svg><svg class="b" style="left:217px;top:24px;" width="28" height="28" viewBox="0 0 28 28"><rect x="0.4" y="0.2" width="26.6" height="26.6" rx="5.5" fill="#ef3b24"/><path d="M9.4 6.8 L24 14.2 L24 26 L9.4 26.8 Z" fill="#fff"/><path d="M10.6 8.4 L21.4 14 L10.6 20.2" fill="none" stroke="#ef3b24" stroke-width="2.2"/></svg><svg class="b" style="left:640px;top:25px;" width="34" height="25" viewBox="0 0 34 25"><g fill="#ededed"><path d="M0.6 23 L0.6 20.2 L7 17 L7 23 Z"/><path d="M8.8 23 L8.8 16 L13 12.6 L13 23 Z"/><path d="M15.2 23 L15.2 10.8 L19.2 8.2 L19.2 23 Z"/><path d="M21.4 23 L21.4 6.2 L25.2 4 L25.2 23 Z"/></g><path d="M27.6 23 L27.6 2.4 L31.4 1.4 L31.4 23 Z" fill="#a6a6a6"/></svg><svg class="b" style="left:682px;top:24px;" width="38" height="28" viewBox="0 0 38 28"><g fill="none" stroke="#ededed" stroke-width="3.1" stroke-linecap="round"><path d="M3.6 9.4 A20.5 20.5 0 0 1 32.4 9.4"/><path d="M8.4 14.6 A13.6 13.6 0 0 1 27.6 14.6"/><path d="M13.2 19.6 A6.8 6.8 0 0 1 22.8 19.6"/></g><path d="M18 26 L14.6 22.6 A4.8 4.8 0 0 1 21.4 22.6 Z" fill="#ededed"/><path d="M29.6 19.6 L32.8 23.2 L31 23.2 L31 27.4 L29.2 27.4 L29.2 23.2 Z" fill="#e4e4e4"/><path d="M26.6 20.6 L28 20.6 L28 27.6 L26.6 26.4 Z" fill="#b4b4b4"/></svg><svg class="b" style="left:726px;top:24px;" width="58" height="28" viewBox="0 0 58 28"><path d="M25.6 6.3 H42.9 A7.7 7.7 0 0 1 42.9 21.7 H25.6 Z" fill="#f5a31a"/><rect x="3.3" y="3.4" width="50" height="21.2" rx="10.6" fill="none" stroke="#f4f4f4" stroke-width="2.8"/><text x="25.6" y="20.2" font-family="Liberation Sans, sans-serif" font-weight="700" font-size="17.5" fill="#f7f1e4" text-anchor="middle" letter-spacing="-0.6">56</text></svg><div class="t" style="top:281.50px;font-size:36.5px;color:#757575;left:168.09px;-webkit-text-stroke:0.35px #757575;transform:scaleX(1.0705);transform-origin:0 0;">Включение таймера сна</div><div class="t" style="top:331.70px;font-size:36.5px;color:#757575;left:171.01px;-webkit-text-stroke:0.35px #757575;transform:scaleX(1.0817);transform-origin:0 0;">Длительное нажатие: настройки</div><div class="t" style="top:377.10px;font-size:36.5px;color:#757575;left:170.64px;-webkit-text-stroke:0.35px #757575;transform:scaleX(1.0511);transform-origin:0 0;">таймера сна</div><div class="b" style="left:17.5px;top:427px;width:794.5px;height:1.5px;background:#e7e7e7;"></div><div class="t" style="top:454.80px;font-size:36.5px;color:#757575;left:170.23px;-webkit-text-stroke:0.35px #757575;transform:scaleX(1.0892);transform-origin:0 0;">Усиление громкости</div><div class="t" style="top:514.80px;font-size:36.5px;color:#757575;left:171.01px;-webkit-text-stroke:0.35px #757575;transform:scaleX(1.0696);transform-origin:0 0;">Длительное нажатие: уменьшение</div><div class="t" style="top:558.60px;font-size:36.5px;color:#757575;left:168.43px;-webkit-text-stroke:0.35px #757575;transform:scaleX(1.1326);transform-origin:0 0;">громкости</div><div class="b" style="left:17.5px;top:610px;width:794.5px;height:1.5px;background:#e7e7e7;"></div><div class="t" style="top:627.80px;font-size:36.5px;color:#757575;left:169.27px;-webkit-text-stroke:0.35px #757575;transform:scaleX(1.0848);transform-origin:0 0;">Эквалайзер</div><div class="t" style="top:679.70px;font-size:36.5px;color:#757575;left:171.01px;-webkit-text-stroke:0.35px #757575;transform:scaleX(1.0745);transform-origin:0 0;">Длительное нажатие: установка</div><div class="t" style="top:723.70px;font-size:36.5px;color:#757575;left:171.20px;-webkit-text-stroke:0.35px #757575;transform:scaleX(1.0763);transform-origin:0 0;">уровней эквалайзера по</div><div class="t" style="top:768.10px;font-size:36.5px;color:#757575;left:171.20px;-webkit-text-stroke:0.35px #757575;transform:scaleX(1.0926);transform-origin:0 0;">умолчанию</div><div class="b" style="left:17.5px;top:818px;width:794.5px;height:1.5px;background:#e7e7e7;"></div><div class="t" style="top:838.10px;font-size:36.5px;color:#757575;left:169.27px;-webkit-text-stroke:0.35px #757575;transform:scaleX(1.0935);transform-origin:0 0;">Скорость воспроизведения</div><div class="t" style="top:889.10px;font-size:36.5px;color:#757575;left:171.01px;-webkit-text-stroke:0.35px #757575;transform:scaleX(1.0745);transform-origin:0 0;">Длительное нажатие: установка</div><div class="t" style="top:933.60px;font-size:36.5px;color:#757575;left:169.60px;-webkit-text-stroke:0.35px #757575;transform:scaleX(1.0942);transform-origin:0 0;">скорости воспроизведения по</div><div class="t" style="top:978.10px;font-size:36.5px;color:#757575;left:171.20px;-webkit-text-stroke:0.35px #757575;transform:scaleX(1.0926);transform-origin:0 0;">умолчанию</div><div class="b" style="left:17.5px;top:1028px;width:794.5px;height:1.5px;background:#e7e7e7;"></div><div class="t" style="top:1054.10px;font-size:36.5px;color:#757575;left:169.29px;-webkit-text-stroke:0.35px #757575;transform:scaleX(1.0862);transform-origin:0 0;">Список персонажей</div><div class="b" style="left:17.5px;top:1113px;width:794.5px;height:1.5px;background:#e7e7e7;"></div><div class="t" style="top:1131.80px;font-size:36.5px;color:#757575;left:169.98px;-webkit-text-stroke:0.35px #757575;transform:scaleX(1.1021);transform-origin:0 0;">Закладки</div><div class="t" style="top:1185.10px;font-size:36.5px;color:#757575;left:171.01px;-webkit-text-stroke:0.35px #757575;transform:scaleX(1.0714);transform-origin:0 0;">Длительное нажатие: добавление</div><div class="t" style="top:1227.80px;font-size:36.5px;color:#757575;left:170.33px;-webkit-text-stroke:0.35px #757575;transform:scaleX(1.1148);transform-origin:0 0;">закладки</div><div class="b" style="left:17.5px;top:1279px;width:794.5px;height:1.5px;background:#e7e7e7;"></div><div class="t" style="top:1297.90px;font-size:36.5px;color:#757575;left:167.96px;-webkit-text-stroke:0.35px #757575;transform:scaleX(1.1145);transform-origin:0 0;">Блокировка кнопок перемотки</div><div class="t" style="top:1349.10px;font-size:36.5px;color:#757575;left:171.01px;-webkit-text-stroke:0.35px #757575;transform:scaleX(1.0741);transform-origin:0 0;">Длительное нажатие: изменение</div><div class="t" style="top:1393.10px;font-size:36.5px;color:#757575;left:168.49px;-webkit-text-stroke:0.35px #757575;transform:scaleX(1.1108);transform-origin:0 0;">положения кнопок перемотки</div><div class="b" style="left:17.5px;top:1444px;width:794.5px;height:1.5px;background:#e7e7e7;"></div><div class="t" style="top:1472.10px;font-size:36.5px;color:#757575;left:169.33px;-webkit-text-stroke:0.35px #757575;transform:scaleX(1.0650);transform-origin:0 0;">Chromecast</div><div class="b" style="left:17.5px;top:1530px;width:794.5px;height:1.5px;background:#e7e7e7;"></div><div class="t" style="top:1557.10px;font-size:36.5px;color:#757575;left:168.06px;-webkit-text-stroke:0.35px #757575;transform:scaleX(1.0952);transform-origin:0 0;">Повторение</div><div class="b" style="left:17.5px;top:1616px;width:794.5px;height:1.5px;background:#e7e7e7;"></div><div class="t" style="top:1633.10px;font-size:36.5px;color:#757575;left:168.10px;-webkit-text-stroke:0.35px #757575;transform:scaleX(1.0817);transform-origin:0 0;">Переворот</div><div class="t" style="top:1684.10px;font-size:36.5px;color:#757575;left:171.01px;-webkit-text-stroke:0.35px #757575;transform:scaleX(1.0817);transform-origin:0 0;">Длительное нажатие: настройки</div><svg class="b" style="left:25.3px;top:335.8px;overflow:visible;" width="31.8" height="31.8" viewBox="0 0 31.8 31.8"><circle cx="15.9" cy="15.9" r="14.12" fill="none" stroke="#757575" stroke-width="3.56"/><path d="M14.79 7.47 V15.74 L22.26 21.94" fill="none" stroke="#757575" stroke-width="3.21"/></svg><div class="t" style="top:325.80px;font-size:16.3px;font-weight:700;color:#757575;letter-spacing:1.009px;left:53.21px;">Zzz</div><svg class="b" style="left:92.7px;top:324px;overflow:visible;" width="31.8" height="31.8" viewBox="0 0 31.8 31.8"><circle cx="15.9" cy="15.9" r="14.12" fill="none" stroke="#2ea8dd" stroke-width="3.56"/><path d="M14.79 7.47 V15.74 L22.26 21.94" fill="none" stroke="#2ea8dd" stroke-width="3.21"/></svg><div class="t" style="top:314.35px;font-size:16.6px;font-weight:700;color:#2ea8dd;letter-spacing:0.927px;left:120.91px;">Zzz</div><div class="t" style="top:361.22px;font-size:21.6px;font-weight:700;color:#2ea8dd;letter-spacing:0.250px;left:83.24px;">10:00</div><svg preserveAspectRatio="none" class="b" style="left:23.9px;top:491.3px;overflow:visible;" width="53.3" height="56" viewBox="0 0 53 46.3"><path d="M1.8 14.6 H9.7 Q15.4 10.2 22.4 0.5 H26.2 V45.8 H22.4 Q15.4 36.1 9.7 31.7 H1.8 Q0 31.7 0 29.9 V16.4 Q0 14.6 1.8 14.6 Z" fill="#757575"/><ellipse cx="26.2" cy="23.15" rx="5.3" ry="22.7" fill="#757575"/><ellipse cx="26.25" cy="23.15" rx="3.85" ry="20.7" fill="#fff"/><path d="M23.2 19.4 A3.3 3.75 0 0 1 23.2 26.9 Z" fill="#757575"/><g fill="none" stroke-width="2.5" stroke-linecap="round"><path d="M34.6 15.8 Q39 23 34.6 30.2" stroke="#e0e0e0"/><path d="M40.6 9.5 Q47.2 22.8 40.6 36.1" stroke="#dcdcdc"/><path d="M46.6 4.6 Q55.2 23 46.6 41.4" stroke="#dedede"/></g></svg><svg preserveAspectRatio="none" class="b" style="left:92px;top:458.1px;overflow:visible;" width="52.4" height="54.4" viewBox="0 0 53 46.3"><path d="M1.8 14.6 H9.7 Q15.4 10.2 22.4 0.5 H26.2 V45.8 H22.4 Q15.4 36.1 9.7 31.7 H1.8 Q0 31.7 0 29.9 V16.4 Q0 14.6 1.8 14.6 Z" fill="#2ea8dd"/><ellipse cx="26.2" cy="23.15" rx="5.3" ry="22.7" fill="#2ea8dd"/><ellipse cx="26.25" cy="23.15" rx="3.85" ry="20.7" fill="#fff"/><path d="M23.2 19.4 A3.3 3.75 0 0 1 23.2 26.9 Z" fill="#2ea8dd"/><g fill="none" stroke-width="2.5" stroke-linecap="round"><path d="M34.6 15.8 Q39 23 34.6 30.2" stroke="#2ea8dd"/><path d="M40.6 9.5 Q47.2 22.8 40.6 36.1" stroke="#2ea8dd"/><path d="M46.6 4.6 Q55.2 23 46.6 41.4" stroke="#2ea8dd"/></g></svg><svg preserveAspectRatio="none" class="b" style="left:92px;top:525.3px;overflow:visible;" width="52.4" height="55.4" viewBox="0 0 53 46.3"><path d="M1.8 14.6 H9.7 Q15.4 10.2 22.4 0.5 H26.2 V45.8 H22.4 Q15.4 36.1 9.7 31.7 H1.8 Q0 31.7 0 29.9 V16.4 Q0 14.6 1.8 14.6 Z" fill="#2ea8dd"/><ellipse cx="26.2" cy="23.15" rx="5.3" ry="22.7" fill="#2ea8dd"/><ellipse cx="26.25" cy="23.15" rx="3.85" ry="20.7" fill="#fff"/><path d="M23.2 19.4 A3.3 3.75 0 0 1 23.2 26.9 Z" fill="#2ea8dd"/><rect x="4" y="21.6" width="9" height="2.9" fill="#fff"/><g fill="none" stroke-width="2.5" stroke-linecap="round"><path d="M34.6 15.8 Q39 23 34.6 30.2" stroke="#e0e0e0"/><path d="M40.6 9.5 Q47.2 22.8 40.6 36.1" stroke="#dcdcdc"/><path d="M46.6 4.6 Q55.2 23 46.6 41.4" stroke="#dedede"/></g></svg><svg class="b" style="left:22.9px;top:690.6px;" width="53" height="52.3" viewBox="0 0 53 52.3"><rect x="0.00" y="0.00" width="8.82" height="5.84" fill="#dcdcdc"/><rect x="0.00" y="7.74" width="8.82" height="5.84" fill="#dcdcdc"/><rect x="0.00" y="15.49" width="8.82" height="5.84" fill="#dcdcdc"/><rect x="0.00" y="23.23" width="8.82" height="5.84" fill="#757575"/><rect x="0.00" y="30.98" width="8.82" height="5.84" fill="#757575"/><rect x="0.00" y="38.72" width="8.82" height="5.84" fill="#757575"/><rect x="0.00" y="46.46" width="8.82" height="5.84" fill="#757575"/><rect x="11.05" y="0.00" width="8.82" height="5.84" fill="#dcdcdc"/><rect x="11.05" y="7.74" width="8.82" height="5.84" fill="#dcdcdc"/><rect x="11.05" y="15.49" width="8.82" height="5.84" fill="#dcdcdc"/><rect x="11.05" y="23.23" width="8.82" height="5.84" fill="#757575"/><rect x="11.05" y="30.98" width="8.82" height="5.84" fill="#757575"/><rect x="11.05" y="38.72" width="8.82" height="5.84" fill="#757575"/><rect x="11.05" y="46.46" width="8.82" height="5.84" fill="#757575"/><rect x="22.09" y="0.00" width="8.82" height="5.84" fill="#dcdcdc"/><rect x="22.09" y="7.74" width="8.82" height="5.84" fill="#dcdcdc"/><rect x="22.09" y="15.49" width="8.82" height="5.84" fill="#dcdcdc"/><rect x="22.09" y="23.23" width="8.82" height="5.84" fill="#757575"/><rect x="22.09" y="30.98" width="8.82" height="5.84" fill="#757575"/><rect x="22.09" y="38.72" width="8.82" height="5.84" fill="#757575"/><rect x="22.09" y="46.46" width="8.82" height="5.84" fill="#757575"/><rect x="33.14" y="0.00" width="8.82" height="5.84" fill="#dcdcdc"/><rect x="33.14" y="7.74" width="8.82" height="5.84" fill="#dcdcdc"/><rect x="33.14" y="15.49" width="8.82" height="5.84" fill="#dcdcdc"/><rect x="33.14" y="23.23" width="8.82" height="5.84" fill="#757575"/><rect x="33.14" y="30.98" width="8.82" height="5.84" fill="#757575"/><rect x="33.14" y="38.72" width="8.82" height="5.84" fill="#757575"/><rect x="33.14" y="46.46" width="8.82" height="5.84" fill="#757575"/><rect x="44.18" y="0.00" width="8.82" height="5.84" fill="#dcdcdc"/><rect x="44.18" y="7.74" width="8.82" height="5.84" fill="#dcdcdc"/><rect x="44.18" y="15.49" width="8.82" height="5.84" fill="#dcdcdc"/><rect x="44.18" y="23.23" width="8.82" height="5.84" fill="#757575"/><rect x="44.18" y="30.98" width="8.82" height="5.84" fill="#757575"/><rect x="44.18" y="38.72" width="8.82" height="5.84" fill="#757575"/><rect x="44.18" y="46.46" width="8.82" height="5.84" fill="#757575"/></svg><svg class="b" style="left:91px;top:690.6px;" width="52.1" height="52.3" viewBox="0 0 52.1 52.3"><rect x="0.00" y="0.00" width="8.67" height="5.84" fill="#dcdcdc"/><rect x="0.00" y="7.74" width="8.67" height="5.84" fill="#dcdcdc"/><rect x="0.00" y="15.49" width="8.67" height="5.84" fill="#dcdcdc"/><rect x="0.00" y="23.23" width="8.67" height="5.84" fill="#2ea8dd"/><rect x="0.00" y="30.98" width="8.67" height="5.84" fill="#2ea8dd"/><rect x="0.00" y="38.72" width="8.67" height="5.84" fill="#2ea8dd"/><rect x="0.00" y="46.46" width="8.67" height="5.84" fill="#2ea8dd"/><rect x="10.86" y="0.00" width="8.67" height="5.84" fill="#dcdcdc"/><rect x="10.86" y="7.74" width="8.67" height="5.84" fill="#2ea8dd"/><rect x="10.86" y="15.49" width="8.67" height="5.84" fill="#2ea8dd"/><rect x="10.86" y="23.23" width="8.67" height="5.84" fill="#2ea8dd"/><rect x="10.86" y="30.98" width="8.67" height="5.84" fill="#2ea8dd"/><rect x="10.86" y="38.72" width="8.67" height="5.84" fill="#2ea8dd"/><rect x="10.86" y="46.46" width="8.67" height="5.84" fill="#2ea8dd"/><rect x="21.72" y="0.00" width="8.67" height="5.84" fill="#dcdcdc"/><rect x="21.72" y="7.74" width="8.67" height="5.84" fill="#dcdcdc"/><rect x="21.72" y="15.49" width="8.67" height="5.84" fill="#2ea8dd"/><rect x="21.72" y="23.23" width="8.67" height="5.84" fill="#2ea8dd"/><rect x="21.72" y="30.98" width="8.67" height="5.84" fill="#2ea8dd"/><rect x="21.72" y="38.72" width="8.67" height="5.84" fill="#2ea8dd"/><rect x="21.72" y="46.46" width="8.67" height="5.84" fill="#2ea8dd"/><rect x="32.57" y="0.00" width="8.67" height="5.84" fill="#dcdcdc"/><rect x="32.57" y="7.74" width="8.67" height="5.84" fill="#dcdcdc"/><rect x="32.57" y="15.49" width="8.67" height="5.84" fill="#dcdcdc"/><rect x="32.57" y="23.23" width="8.67" height="5.84" fill="#2ea8dd"/><rect x="32.57" y="30.98" width="8.67" height="5.84" fill="#2ea8dd"/><rect x="32.57" y="38.72" width="8.67" height="5.84" fill="#2ea8dd"/><rect x="32.57" y="46.46" width="8.67" height="5.84" fill="#2ea8dd"/><rect x="43.43" y="0.00" width="8.67" height="5.84" fill="#dcdcdc"/><rect x="43.43" y="7.74" width="8.67" height="5.84" fill="#2ea8dd"/><rect x="43.43" y="15.49" width="8.67" height="5.84" fill="#2ea8dd"/><rect x="43.43" y="23.23" width="8.67" height="5.84" fill="#2ea8dd"/><rect x="43.43" y="30.98" width="8.67" height="5.84" fill="#2ea8dd"/><rect x="43.43" y="38.72" width="8.67" height="5.84" fill="#2ea8dd"/><rect x="43.43" y="46.46" width="8.67" height="5.84" fill="#2ea8dd"/></svg><div class="t" style="top:907.85px;font-size:35.5px;font-weight:700;color:#757575;left:23.17px;-webkit-text-stroke:0.8px #757575;transform:scaleX(0.7748);transform-origin:0 0;">1.0x</div><div class="t" style="top:907.85px;font-size:35.5px;font-weight:700;color:#2ea8dd;left:86.81px;-webkit-text-stroke:0.8px #2ea8dd;transform:scaleX(0.8890);transform-origin:0 0;">2.0x</div><svg preserveAspectRatio="none" class="b" style="left:19.9px;top:1052.3px;overflow:visible;" width="62.2" height="39.3" viewBox="1 5 22 14"><path d="M16 11c1.66 0 2.99-1.34 2.99-3S17.66 5 16 5c-1.66 0-3 1.34-3 3s1.34 3 3 3zm-8 0c1.66 0 2.99-1.34 2.99-3S9.66 5 8 5C6.34 5 5 6.34 5 8s1.34 3 3 3zm0 2c-2.33 0-7 1.17-7 3.5V19h14v-2.5c0-2.33-4.67-3.5-7-3.5zm8 0c-.29 0-.62.02-.97.05 1.16.84 1.97 1.97 1.97 3.45V19h6v-2.5c0-2.33-4.67-3.5-7-3.5z" fill="#757575"/></svg><svg preserveAspectRatio="none" class="b" style="left:31.3px;top:1172.1px;overflow:visible;" width="39.3" height="47.6" viewBox="5 3 14 18"><path d="M17 3H7c-1.1 0-1.99.9-1.99 2L5 21l7-3 7 3V5c0-1.1-.9-2-2-2zm0 15l-5-2.18L7 18V5h10v13z" fill="#757575"/></svg><svg class="b" style="left:29.1px;top:1334.7px;overflow:visible;" width="43.4" height="55.1" viewBox="0 0 43.4 55.1"><path d="M10.51 20.30 V13.89 A11.19 11.19 0 0 1 32.89 13.89 V28.80" fill="none" stroke="#757575" stroke-width="5.4"/><rect x="0" y="27.80" width="43.4" height="27.3" rx="3.2" fill="#757575"/><circle cx="21.70" cy="41.18" r="2.8" fill="#fff"/></svg><svg class="b" style="left:96.1px;top:1342.7px;overflow:visible;" width="43.7" height="47.1" viewBox="0 0 43.7 47.1"><path d="M10.57 20.80 V13.98 A11.28 11.28 0 0 1 33.13 13.98 V20.80" fill="none" stroke="#2ea8dd" stroke-width="5.4"/><rect x="0" y="19.80" width="43.7" height="27.3" rx="3.2" fill="#2ea8dd"/><circle cx="21.85" cy="33.18" r="2.8" fill="#fff"/></svg><svg preserveAspectRatio="none" class="b" style="left:27.9px;top:1468.7px;overflow:visible;" width="46.1" height="37.8" viewBox="1 3 22 18"><path d="M21 3H3c-1.1 0-2 .9-2 2v3h2V5h18v14h-7v2h7c1.1 0 2-.9 2-2V5c0-1.1-.9-2-2-2zM1 18v3h3c0-1.66-1.34-3-3-3zm0-4v2c2.76 0 5 2.24 5 5h2c0-3.87-3.13-7-7-7zm0-4v2c4.97 0 9 4.03 9 9h2c0-6.08-4.93-11-11-11z" fill="#757575"/></svg><svg preserveAspectRatio="none" class="b" style="left:95.1px;top:1468.7px;overflow:visible;" width="46.4" height="37.8" viewBox="1 3 22 18"><path d="M1 18v3h3c0-1.66-1.34-3-3-3zm0-4v2c2.76 0 5 2.24 5 5h2c0-3.87-3.13-7-7-7zm18-7H5v1.63c3.96 1.28 7.09 4.41 8.37 8.37H19V7zM1 10v2c4.97 0 9 4.03 9 9h2c0-6.08-4.93-11-11-11zm20-7H3c-1.1 0-2 .9-2 2v3h2V5h18v14h-7v2h7c1.1 0 2-.9 2-2V5c0-1.1-.9-2-2-2z" fill="#757575"/></svg><svg class="b" style="left:0px;top:1530px;" width="200" height="90" viewBox="0 1530 200 90"><g fill="none" stroke="#757575" stroke-width="4.3"><path d="M33.5 1566.6 V1555.6 H60.5"/><path d="M68.9 1581.3 V1591.4 H41.5"/></g><path d="M59.5 1548.8 L73.2 1555.6 L59.5 1562.6 Z" fill="#757575"/><path d="M42.6 1584.4 L28.6 1591.5 L42.6 1598.2 Z" fill="#757575"/><g fill="none" stroke="#2ea8dd" stroke-width="4.5"><path d="M95.9 1564 V1550.8 H131"/><path d="M141.8 1583 V1596.5 H106.5"/></g><path d="M130 1542.6 L146.3 1550.6 L130 1558.6 Z" fill="#2ea8dd"/><path d="M107.5 1588.6 L91.3 1596.5 L107.5 1604.4 Z" fill="#2ea8dd"/><path d="M127.2 1561.6 L110.6 1585" stroke="#2ea8dd" stroke-width="3.6"/><g font-family="Liberation Sans, sans-serif" font-weight="700" font-size="21.5" fill="#2ea8dd"><text x="104.6" y="1573.4">1</text><text x="119" y="1590.2">2</text></g></svg><svg class="b" style="left:0px;top:1660px;" width="200" height="60" viewBox="0 1660 200 60"><path d="M29.2 1697.2 A20.5 20.5 0 0 1 70.2 1702.2" fill="none" stroke="#757575" stroke-width="5"/><path d="M25.2 1689.2 L37.7 1692.2 L29.7 1702.2 Z" fill="#757575"/><rect x="44.1" y="1689.8" width="5.6" height="16" fill="#757575"/><rect x="53.4" y="1689.8" width="5.6" height="16" fill="#757575"/><path d="M91.9 1697.4 A25.7 25.7 0 0 1 143.3 1702.4" fill="none" stroke="#2ea8dd" stroke-width="5"/><path d="M87.9 1689.4 L100.4 1692.4 L92.4 1702.4 Z" fill="#2ea8dd"/><rect x="109.9" y="1688.6" width="6.8" height="16" fill="#2ea8dd"/><rect x="121" y="1688.6" width="6.8" height="16" fill="#2ea8dd"/></svg><div class="b" style="left:0;top:61px;width:830px;height:194.7px;background:#fff;box-shadow:0 1.5px 4px rgba(0,0,0,0.2)"></div><svg preserveAspectRatio="none" class="b" style="left:42.7px;top:92.2px;overflow:visible;" width="33.7" height="32.4" viewBox="4 4 16 16"><path d="M20 11H7.83l5.59-5.59L12 4l-8 8 8 8 1.41-1.41L7.83 13H20v-2z" fill="#757575"/></svg><div class="t" style="top:88.88px;font-size:42.2px;color:#212121;letter-spacing:1.112px;left:151.78px;-webkit-text-stroke:1.1px #212121;">Помощь</div><svg preserveAspectRatio="none" class="b" style="left:759.5px;top:81.5px;overflow:visible;" width="39.5" height="47.3" viewBox="5 3 14 18"><path d="M17 3H7c-1.1 0-1.99.9-1.99 2L5 21l7-3 7 3V5c0-1.1-.9-2-2-2zm0 15l-5-2.18L7 18V5h10v13z" fill="#757575"/></svg><div class="t" style="top:191.00px;font-size:30px;color:#757575;letter-spacing:-0.536px;left:-54.86px;-webkit-text-stroke:0.6px #757575;">ВЕРСИЯ</div><div class="t" style="top:191.00px;font-size:30px;color:#757575;letter-spacing:-0.536px;left:115.94px;-webkit-text-stroke:0.6px #757575;">БИБЛИОТЕКА</div><div class="t" style="top:191.00px;font-size:30px;color:#212121;letter-spacing:-0.642px;left:364.97px;-webkit-text-stroke:0.6px #212121;">ПЛЕЕР</div><div class="t" style="top:191.00px;font-size:30px;color:#757575;letter-spacing:1.036px;left:515.27px;-webkit-text-stroke:0.6px #757575;">ФУНКЦИИ</div><div class="t" style="top:191.00px;font-size:30px;color:#757575;letter-spacing:-0.536px;left:714.24px;-webkit-text-stroke:0.6px #757575;">ВОПРОСЫ</div><div class="b" style="left:339px;top:250.7px;width:152px;height:5px;background:#3fa9d8;"></div><div class="b" style="left:0px;top:1697px;width:830px;height:100px;background:#fff;border-top:1.5px solid #e9e9e9;"></div><svg class="b" style="left:230px;top:1733px;" width="28" height="28" viewBox="0 0 28 28"><g stroke="#8c8c8c" stroke-width="2" stroke-linecap="round"><path d="M2.8 3.6H25"/><path d="M2.8 13.6H25"/><path d="M2.8 23.6H25"/></g></svg><svg class="b" style="left:401px;top:1733px;" width="28" height="28" viewBox="0 0 28 28"><rect x="2.9" y="2.9" width="21.8" height="21.8" rx="5.2" fill="none" stroke="#8c8c8c" stroke-width="2.4"/></svg><svg class="b" style="left:578px;top:1733px;" width="24" height="28" viewBox="0 0 24 28"><path d="M17.6 2.6 L5.4 13.8 L17.6 25" fill="none" stroke="#8c8c8c" stroke-width="2.3" stroke-linecap="round" stroke-linejoin="round"/></svg></div>
</body></html>
